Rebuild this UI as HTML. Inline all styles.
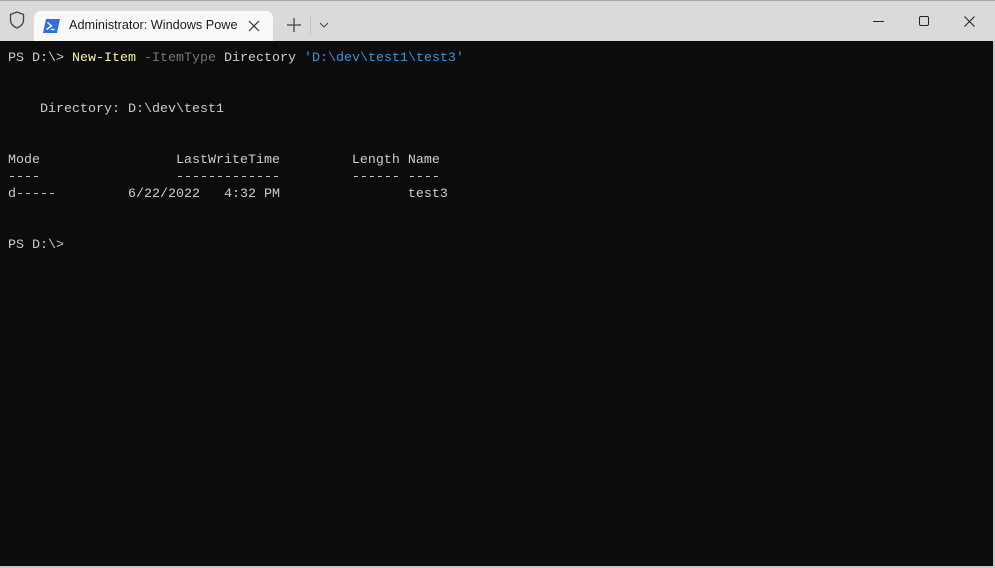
<!DOCTYPE html>
<html><head><style>
*{margin:0;padding:0;box-sizing:border-box}
body{width:995px;height:568px;overflow:hidden;background:#0c0c0c;position:relative;font-family:"Liberation Sans",sans-serif}
.title{position:absolute;left:0;top:0;width:995px;height:41px;background:#dadada;border-top:1px solid #a8a8a8}
.tab{position:absolute;left:34px;top:10px;width:239px;height:31px;background:#f9f9f9;border-radius:7px 7px 0 0}
.tab .t{position:absolute;left:35px;top:7px;font-size:12.7px;color:#1a1a1a}
.term{position:absolute;left:0;top:41px;width:993px;height:525px;background:#0c0c0c}
pre{position:absolute;left:8px;top:50px;font-family:"Liberation Mono",monospace;font-size:13.33px;line-height:17px;color:#cccccc}
.y{color:#f9f1a5}.g{color:#767676}.b{color:#3a96dd}
.rb{position:absolute;right:0;top:41px;width:2px;height:527px;background:#c8c8c8}
.bb{position:absolute;left:0;bottom:0;width:995px;height:2px;background:#c8c8c8}
</style></head><body>
<div class="title">
<svg style="position:absolute;left:8px;top:9px" width="18" height="20" viewBox="0 0 18 20"><path d="M9 2 L15.5 4.5 V10 C15.5 14 12.5 16.5 9 18 C5.5 16.5 2.5 14 2.5 10 V4.5 Z" fill="none" stroke="#444" stroke-width="1.3"/></svg>
<div class="tab">
<svg style="position:absolute;left:9px;top:8px" width="17" height="14" viewBox="0 0 17 14"><path d="M3 0 H17 L14 14 H0 Z" fill="#2f6fd8"/><path d="M4.5 3.5 L8.5 7 L3.5 10.5" fill="none" stroke="#fff" stroke-width="1.4"/><path d="M8 10.5 H11.5" stroke="#fff" stroke-width="1.4"/></svg>
<div class="t">Administrator: Windows Powe</div>
<svg style="position:absolute;left:214px;top:9px" width="12" height="12" viewBox="0 0 12 12"><path d="M1 1 L11 11 M11 1 L1 11" stroke="#333" stroke-width="1.2"/></svg>
</div>
<svg style="position:absolute;left:287px;top:17px" width="14" height="14" viewBox="0 0 14 14"><path d="M7 0 V14 M0 7 H14" stroke="#444" stroke-width="1.3"/></svg>
<div style="position:absolute;left:310px;top:14px;width:1px;height:20px;background:#c4c4c4"></div>
<svg style="position:absolute;left:319px;top:21px" width="10" height="6" viewBox="0 0 10 6"><path d="M1 1 L5 5 L9 1" fill="none" stroke="#444" stroke-width="1.1"/></svg>
<div style="position:absolute;left:873px;top:20px;width:11px;height:1px;background:#222"></div>
<div style="position:absolute;left:919px;top:15px;width:10px;height:10px;border:1px solid #222;border-radius:2px"></div>
<svg style="position:absolute;left:964px;top:15px" width="11" height="11" viewBox="0 0 11 11"><path d="M0.5 0.5 L10.5 10.5 M10.5 0.5 L0.5 10.5" stroke="#222" stroke-width="1.1"/></svg>
</div>
<div class="term"></div>
<pre>PS D:\&gt; <span class="y">New-Item</span> <span class="g">-ItemType</span> Directory <span class="b">'D:\dev\test1\test3'</span>


    Directory: D:\dev\test1


Mode                 LastWriteTime         Length Name
----                 -------------         ------ ----
d-----         6/22/2022   4:32 PM                test3


PS D:\&gt;</pre>
<div class="rb"></div><div class="bb"></div>
</body></html>
